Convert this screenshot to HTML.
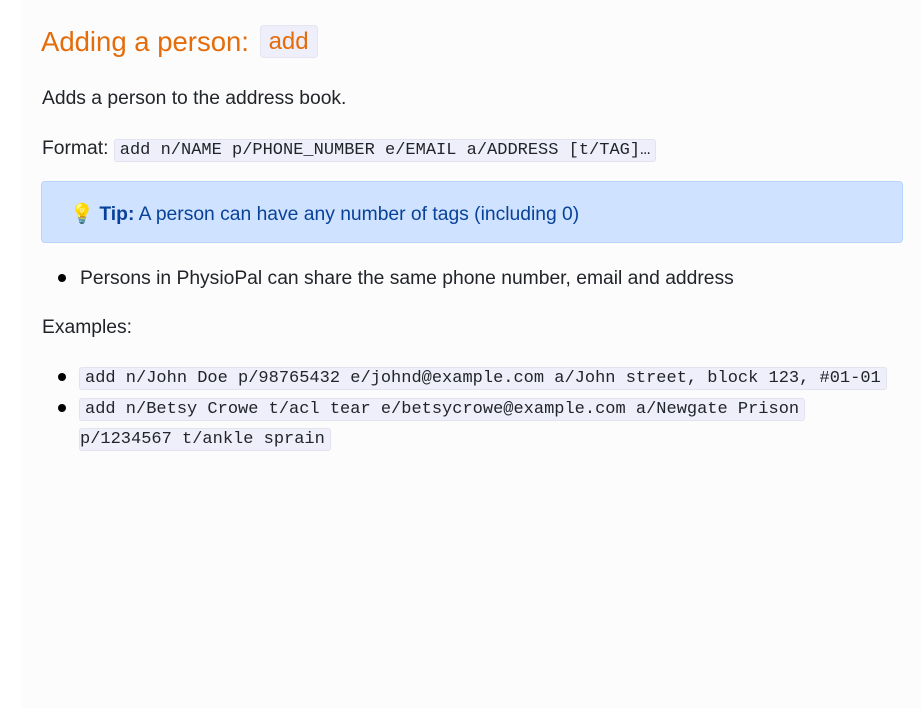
<!DOCTYPE html>
<html><head><meta charset="utf-8"><style>
body{margin:0;background:#fff;width:921px;height:727px;overflow:hidden;font-family:"Liberation Sans",sans-serif;color:#212529}
.main{position:absolute;left:22px;top:0;width:899px;height:708px;background:#fcfcfd}
.a{position:absolute;white-space:nowrap}
code{font-family:"Liberation Mono",monospace;font-size:17px;background:#efeffb;border:1px solid #e3e3f0;border-radius:3px;padding:1px 5px}
h1{position:absolute;left:41px;top:26px;margin:0;font-weight:normal;font-size:27.5px;color:#e46c0a}
h1 span{font-size:24px;background:#efeffb;border:1px solid #e5e5f0;border-radius:4px;padding:2px 8px;margin-left:3px;position:relative;top:-2px}
p{font-size:19.3px;margin:0}
.tip{position:absolute;left:41px;top:181px;width:860px;height:60px;background:#cfe2ff;border:1px solid #b6d4fe;border-radius:4px;color:#084298}
.dot{position:absolute;width:8px;height:8px;border-radius:50%;background:#000}
</style></head><body>
<div class="main"></div>
<h1>Adding a person: <span>add</span></h1>
<p class="a" style="left:42px;top:88px">Adds a person to the address book.</p>
<p class="a" style="left:42px;top:138px">Format: <code>add n/NAME p/PHONE_NUMBER e/EMAIL a/ADDRESS [t/TAG]…</code></p>
<div class="tip"><p class="a" style="left:28px;top:20px">💡 <b>Tip:</b> A person can have any number of tags (including 0)</p></div>
<div class="dot" style="left:58px;top:274px"></div>
<p class="a" style="left:80px;top:268px">Persons in PhysioPal can share the same phone number, email and address</p>
<p class="a" style="left:42px;top:317px">Examples:</p>
<div class="dot" style="left:58px;top:373px"></div>
<p class="a" style="left:79px;top:366px"><code>add n/John Doe p/98765432 e/johnd@example.com a/John street, block 123, #01-01</code></p>
<div class="dot" style="left:58px;top:404px"></div>
<p class="a" style="left:79px;top:397px"><code>add n/Betsy Crowe t/acl tear e/betsycrowe@example.com a/Newgate Prison</code></p>
<p class="a" style="left:79px;top:427px"><code style="padding-left:0">p/1234567 t/ankle sprain</code></p>
</body></html>
